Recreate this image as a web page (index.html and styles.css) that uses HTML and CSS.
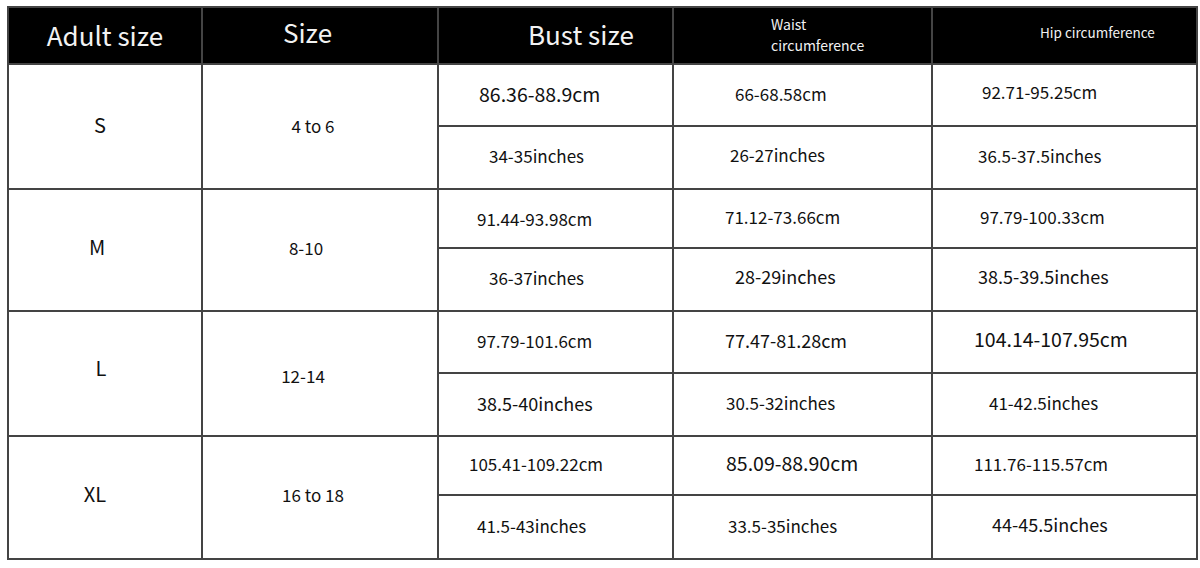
FILE: index.html
```html
<!DOCTYPE html>
<html>
<head>
<meta charset="utf-8">
<link rel="stylesheet" href="styles.css">
</head>
<body>
<div class="chart">
  <div class="hd c-adult">Adult size</div>
  <div class="hd c-size">Size</div>
  <div class="hd c-bust">Bust size</div>
  <div class="hd c-waist">Waist<br>circumference</div>
  <div class="hd c-hip">Hip circumference</div>

  <div class="lbl l-s">S</div>
  <div class="num n-s">4 to 6</div>
  <div class="val lg i40">86.36-88.9cm</div>
  <div class="val i61">66-68.58cm</div>
  <div class="val i49 up">92.71-95.25cm</div>
  <div class="val i50">34-35inches</div>
  <div class="val i56 up">26-27inches</div>
  <div class="val i45">36.5-37.5inches</div>

  <div class="lbl l-m">M</div>
  <div class="num n-m">8-10</div>
  <div class="val i38 dn">91.44-93.98cm</div>
  <div class="val i51">71.12-73.66cm</div>
  <div class="val i47">97.79-100.33cm</div>
  <div class="val i50">36-37inches</div>
  <div class="val md i61 up">28-29inches</div>
  <div class="val md i45 up">38.5-39.5inches</div>

  <div class="lbl l-l">L</div>
  <div class="num n-l">12-14</div>
  <div class="val i38">97.79-101.6cm</div>
  <div class="val md i51">77.47-81.28cm</div>
  <div class="val lg i41 up">104.14-107.95cm</div>
  <div class="val md i38">38.5-40inches</div>
  <div class="val i52">30.5-32inches</div>
  <div class="val i56">41-42.5inches</div>

  <div class="lbl l-xl">XL</div>
  <div class="num n-xl">16 to 18</div>
  <div class="val i30">105.41-109.22cm</div>
  <div class="val lg i52 up">85.09-88.90cm</div>
  <div class="val i41">111.76-115.57cm</div>
  <div class="val i38">41.5-43inches</div>
  <div class="val i54">33.5-35inches</div>
  <div class="val md i59 up">44-45.5inches</div>
</div>
</body>
</html>
```

FILE: styles.css
```css
html, body {
  margin: 0;
  padding: 0;
  background: #ffffff;
}

body {
  width: 1200px;
  height: 568px;
  overflow: hidden;
  font-family: "Noto Sans CJK SC", "Noto Sans", sans-serif;
  color: #111111;
}

.chart {
  margin: 6px 0 0 7px;
  width: 1191px;
  box-sizing: border-box;
  padding: 2px;
  background: #444444;
  display: grid;
  gap: 2px;
  grid-template-columns: 192px 234px 233px 257px 263px;
  grid-template-rows: 55px 60px 61px 57px 61px 60px 61px 57px 62px;
}

.chart > div {
  background: #ffffff;
  display: flex;
  align-items: center;
  white-space: nowrap;
}

.chart > .hd {
  background: #000000;
  color: #f2f2f2;
}

.c-adult {
  justify-content: center;
  font-size: 26px;
  padding-bottom: 3px;
}

.c-size {
  justify-content: center;
  padding-right: 25px;
  font-size: 26px;
  padding-bottom: 8px;
}

.c-bust {
  padding-left: 89px;
  font-size: 26px;
  padding-bottom: 4px;
}

.c-waist {
  padding-left: 97px;
  font-size: 14px;
  line-height: 21px;
  padding-bottom: 2px;
}

.c-hip {
  padding-left: 107px;
  font-size: 13.5px;
  padding-bottom: 7px;
}

.lbl {
  grid-row: span 2;
  justify-content: center;
  font-size: 20px;
}

.l-s { padding-right: 10px; padding-bottom: 4px; }
.l-m { padding-right: 16px; padding-bottom: 8px; }
.l-l { padding-right: 8px; padding-bottom: 12px; }
.l-xl { padding-right: 20px; padding-bottom: 8px; }

.num {
  grid-row: span 2;
  justify-content: center;
  font-size: 17px;
}

.n-s { padding-right: 14px; padding-bottom: 2px; }
.n-m { padding-right: 28px; padding-bottom: 6px; }
.n-l { padding-right: 34px; padding-top: 4px; }
.n-xl { padding-right: 14px; padding-bottom: 6px; }

.val {
  font-size: 17px;
  padding-bottom: 4px;
}

.val.up {
  padding-bottom: 7px;
}

.val.dn {
  padding-bottom: 0;
}

.val.md {
  font-size: 18px;
}

.val.lg {
  font-size: 19.5px;
}

.i30 { padding-left: 30px; }
.i38 { padding-left: 38px; }
.i40 { padding-left: 40px; }
.i41 { padding-left: 41px; }
.i45 { padding-left: 45px; }
.i47 { padding-left: 47px; }
.i49 { padding-left: 49px; }
.i50 { padding-left: 50px; }
.i51 { padding-left: 51px; }
.i52 { padding-left: 52px; }
.i54 { padding-left: 54px; }
.i56 { padding-left: 56px; }
.i59 { padding-left: 59px; }
.i61 { padding-left: 61px; }
```
